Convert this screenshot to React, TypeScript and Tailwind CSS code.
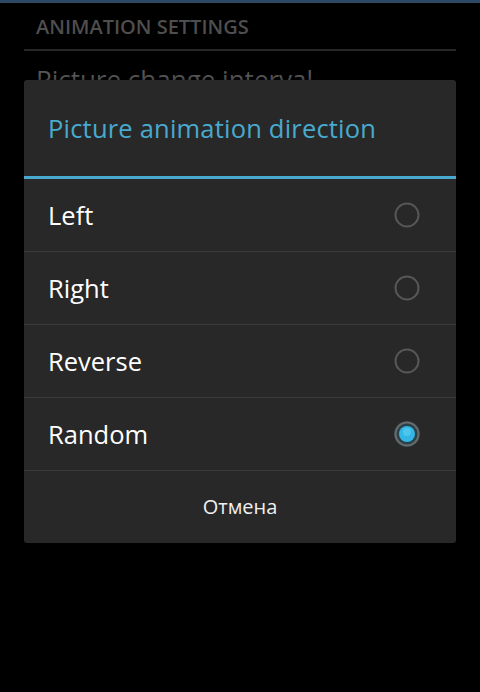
import { useState } from 'react';

const options = ['Left', 'Right', 'Reverse', 'Random'];

function Radio({ checked }: { checked: boolean }) {
  return (
    <svg width="28" height="28" viewBox="0 0 28 28">
      {checked && <circle cx="14" cy="14" r="13" fill="#33b5e5" opacity="0.18" />}
      <circle cx="14" cy="14" r="11.5" fill="none" stroke={checked ? '#6a6a6a' : '#575757'} strokeWidth="2" />
      {checked && <circle cx="14" cy="14" r="8" fill="#33b5e5" />}
      {checked && <circle cx="14" cy="12" r="4" fill="#5fd0f5" opacity="0.6" />}
    </svg>
  );
}

export default function App() {
  const [selected, setSelected] = useState('Random');

  return (
    <div className="relative w-[480px] h-[692px] bg-black overflow-hidden" style={{ fontFamily: '"Open Sans", "Noto Sans", sans-serif' }}>
      <div className="h-[3px] bg-[#2c4862]" />
      <div className="px-6">
        <div className="pl-3 pt-[12px] pb-[10px] text-[20px] font-semibold text-[#4e4e4e] leading-6">
          ANIMATION SETTINGS
        </div>
        <div className="h-[2px] bg-[#262626]" />
        <div className="pl-3 pt-[12px] text-[26px] text-[#555] leading-8">Picture change interval</div>
      </div>

      <div className="absolute left-6 top-[80px] w-[432px] bg-[#282828] rounded-[3px] shadow-[0_2px_6px_rgba(0,0,0,0.8)]">
        <div className="h-[96px] flex items-center pl-6 text-[25.5px] text-[#48aace] tracking-[0.2px]">
          Picture animation direction
        </div>
        <div className="h-[3px] bg-[#48aace]" />
        <div className="flex flex-col">
          {options.map((o, i) => (
            <div key={o}>
              {i > 0 && <div className="h-[1px] bg-[#3b3b3b]" />}
              <button
                onClick={() => setSelected(o)}
                className="w-full h-[72px] flex items-center justify-between pl-6 pr-[35px] text-left"
              >
                <span className="text-[25.5px] text-white">{o}</span>
                <Radio checked={selected === o} />
              </button>
            </div>
          ))}
        </div>
        <div className="h-[1px] bg-[#3b3b3b]" />
        <button className="w-full h-[72px] flex items-center justify-center text-[20px] text-[#f0f0f0]">
          Отмена
        </button>
      </div>
    </div>
  );
}
